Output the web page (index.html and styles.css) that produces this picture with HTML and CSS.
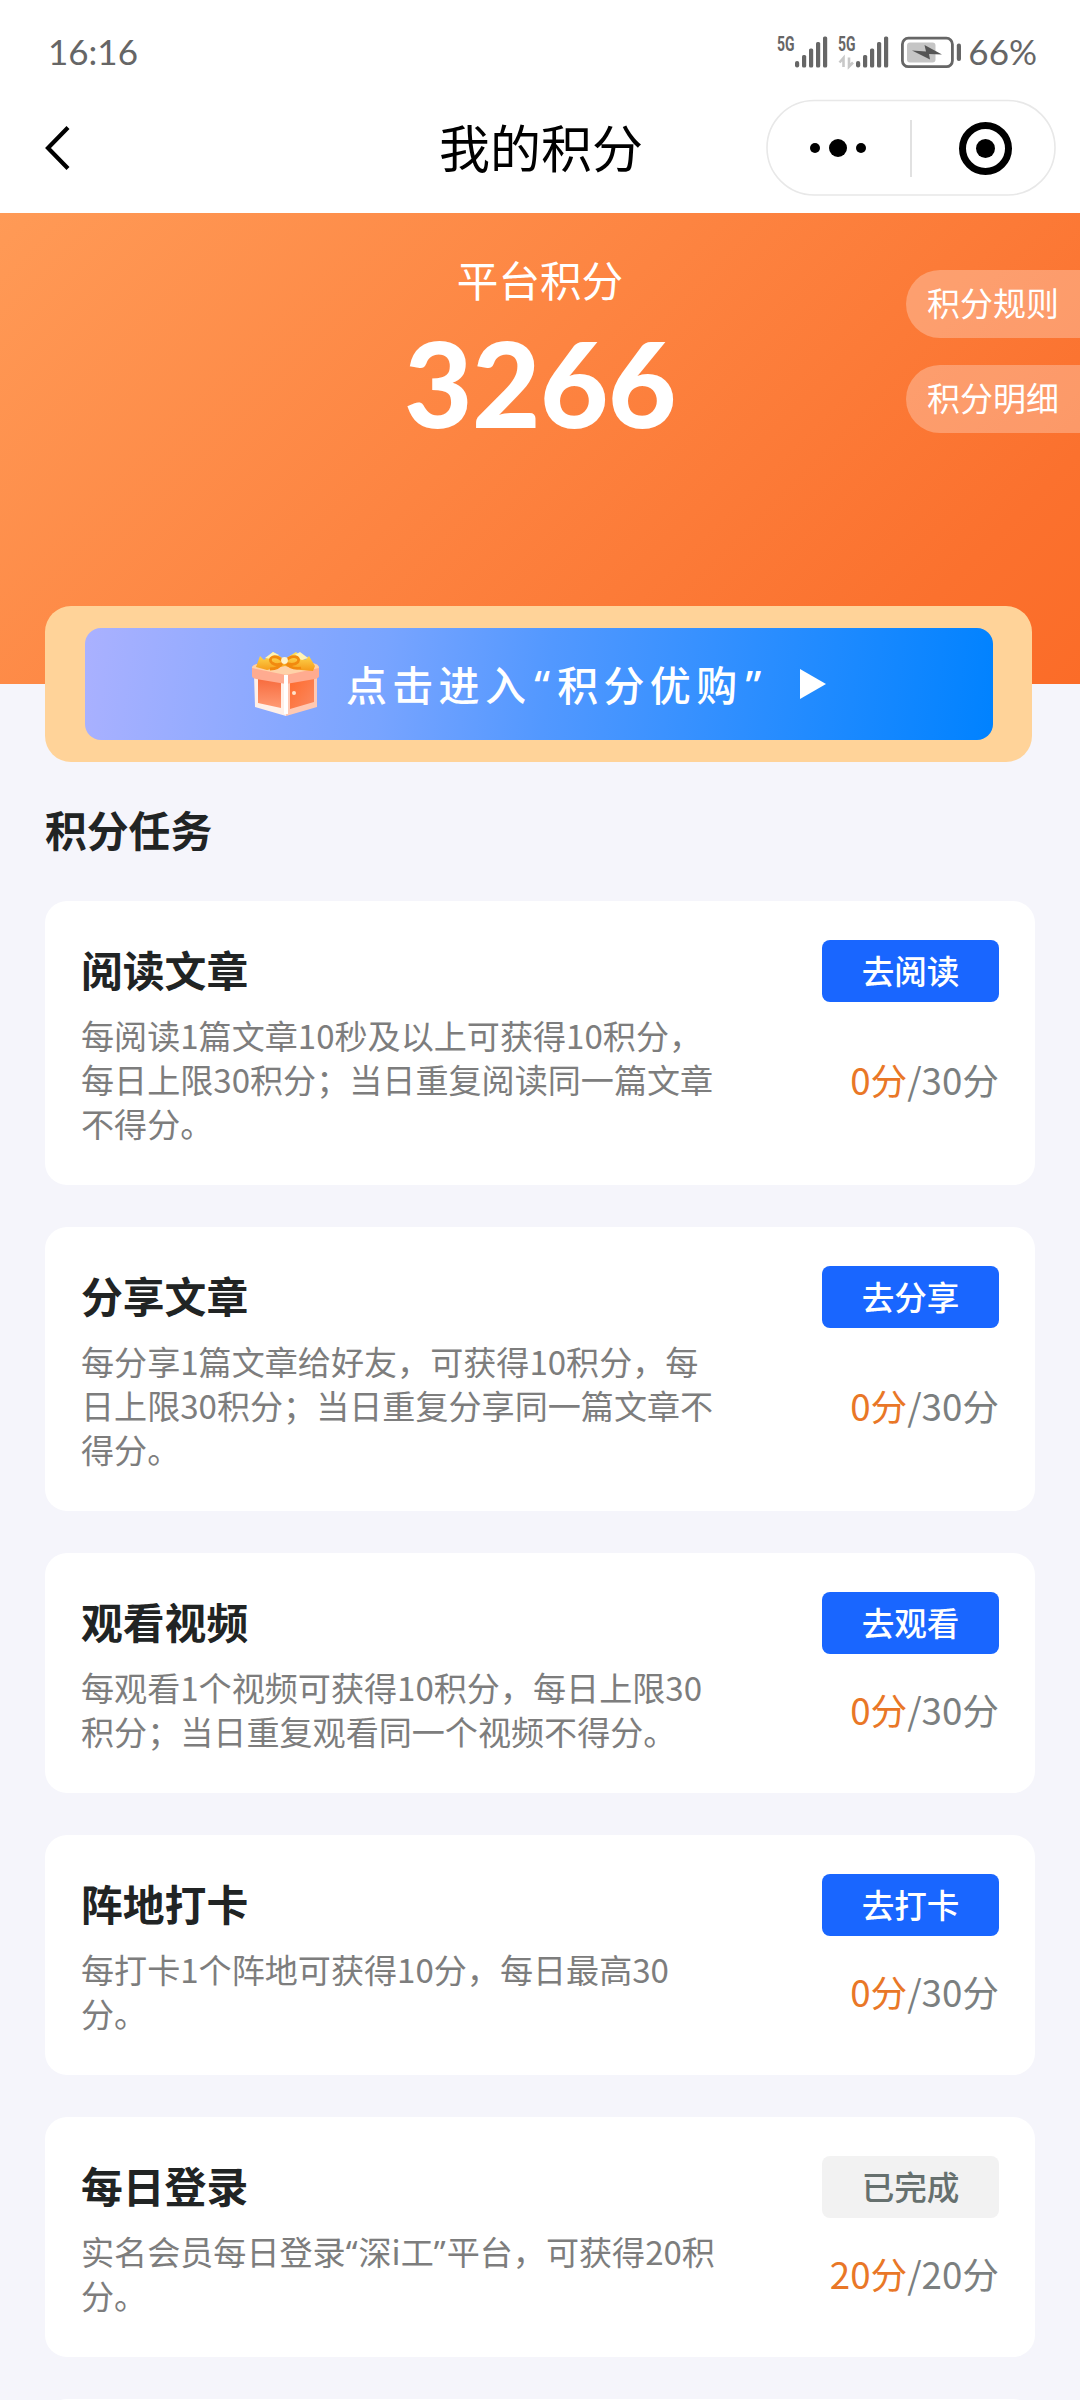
FILE: index.html
```html
<!DOCTYPE html>
<html lang="zh-CN">
<head>
<meta charset="utf-8">
<title>我的积分</title>
<link rel="stylesheet" href="styles.css">
</head>
<body>
<div class="page">
  <header class="top">
    <div class="status">
      <span class="status-text">16:16</span>
      <div class="status-right">
        <svg class="status-icons" width="188" height="40" viewBox="775 32 188 40">
          <g fill="#666">
            <text x="776" y="50.5" class="net" textLength="17.5" lengthAdjust="spacingAndGlyphs">5G</text>
            <text x="837" y="50.5" class="net" textLength="17.5" lengthAdjust="spacingAndGlyphs">5G</text>
            <g id="bars">
              <rect x="794" y="61" width="4.2" height="6.5" rx="2"/>
              <rect x="801" y="55" width="4.2" height="12.5" rx="1.6"/>
              <rect x="808" y="48.5" width="4.2" height="19" rx="1.6"/>
              <rect x="815" y="42" width="4.2" height="25.5" rx="1.6"/>
              <rect x="822" y="36.5" width="4.2" height="31" rx="1.6"/>
            </g>
            <use href="#bars" x="61"/>
          </g>
          <path d="M842.5 67v-9l-4 4.500M848 57.500v9l4-4" fill="none" stroke="#c8c8c8" stroke-width="2.600"/>
          <rect x="901.4" y="38.2" width="50" height="28.5" rx="6" fill="none" stroke="#666" stroke-width="2.8"/>
          <rect x="906" y="42.5" width="28.5" height="20" rx="3" fill="#c5c5c5"/>
          <path d="M911 50.500l14 1-1.500-6.500 17.500 9.500-13-.5 1 5.500z" fill="#555"/>
          <rect x="955.8" y="43.5" width="4.2" height="17.5" rx="2" fill="#666"/>
        </svg>
        <span class="status-text">66%</span>
      </div>
    </div>
    <nav class="nav">
      <svg class="back" width="28" height="52" viewBox="0 0 28 52"><path d="M25 5.500L5 26l20 20.500" fill="none" stroke="#000" stroke-width="4.200"/></svg>
      <h1 class="nav-title">我的积分</h1>
      <svg class="capsule" width="290" height="97" viewBox="766 99 290 97">
        <rect x="767" y="100.5" width="288" height="94.5" rx="47.2" fill="#fff" stroke="#e8e8e8" stroke-width="1.6"/>
        <path d="M911 120v57" stroke="#dedede" stroke-width="1.8"/>
        <circle cx="815" cy="148" r="5"/><circle cx="838" cy="148" r="9"/><circle cx="861" cy="148" r="5"/>
        <circle cx="985.5" cy="148.5" r="23" fill="none" stroke="#000" stroke-width="7"/>
        <circle cx="985.5" cy="148.5" r="9.5"/>
      </svg>
    </nav>
  </header>

  <section class="hero">
    <div class="label">平台积分</div>
    <div class="points">3266</div>
    <div class="links">
      <a class="link">积分规则</a>
      <a class="link">积分明细</a>
    </div>
  </section>

  <div class="shop">
    <a class="shop-btn">
      <svg class="gift" width="72" height="66" viewBox="0 0 72 66">
        <defs>
          <linearGradient id="boxL" x1="0" y1="0" x2="0" y2="1"><stop offset="0" stop-color="#f76a3c"/><stop offset="1" stop-color="#ff9a74"/></linearGradient>
          <linearGradient id="boxR" x1="0" y1="0" x2="1" y2="1"><stop offset="0" stop-color="#ff6a2b"/><stop offset="1" stop-color="#fa8a63"/></linearGradient>
          <linearGradient id="bow" x1="0" y1="0" x2="0" y2="1"><stop offset="0" stop-color="#ffe45c"/><stop offset="1" stop-color="#f59a18"/></linearGradient>
        </defs>
        <path d="M4 23l32 6v36L5 56z" fill="#fff0e8"/>
        <path d="M36 29l31-6v33L36 65z" fill="#ffc9b3"/>
        <path d="M8 27l23 4v26L8 52z" fill="url(#boxL)"/>
        <path d="M40 31l24-5v25l-24 7z" fill="url(#boxR)"/>
        <path d="M2 17q0-3 5-4l27-5 28 4q7 1 7 5v8q0 2-4 3l-29 5-30-5q-4-1-4-3z" fill="#ffab90"/>
        <path d="M2 17q0-3 5-4l27-5 28 4q7 1 7 5l-33 7z" fill="#ffd2a8"/>
        <path d="M36 24v39" stroke="#fff" stroke-width="4"/>
        <path d="M6 16l4-11 4 4 9-8 8 5 3 3 4-3 8-5 9 8 4-4 6 10-2 5-12-1-16-4-18 4z" fill="url(#bow)"/>
        <path d="M15 7l8-6 6 3-7 4zM43 5l7-4 8 6-6 2z" fill="#fff3b5"/>
        <path d="M34 11C24 1 17 8 22 12q6 4 12-1c9-9 17-5 14 0q-5 5-14 0zM33 11q-4 7-13 7M35 11q6 8 16 6" fill="none" stroke="#f28a0f" stroke-width="2.8"/>
        <circle cx="34.5" cy="9.5" r="3.4" fill="#fff4ce"/>
        <circle cx="44" cy="42" r="2" fill="#ffe3cb"/>
      </svg>
      <span class="shop-text">点击进入<span class="q">“</span>积分优购<span class="q">”</span></span>
      <svg class="play" width="26" height="30" viewBox="0 0 26 30"><path d="M0 0l26 15L0 30z" fill="#fff"/></svg>
    </a>
  </div>

  <main class="tasks">
    <h2 class="section-title">积分任务</h2>
    <article class="card">
      <div class="row head"><h3 class="card-title">阅读文章</h3><button class="btn">去阅读</button></div>
      <div class="row body"><p class="desc">每阅读1篇文章10秒及以上可获得10积分，<br>每日上限30积分；当日重复阅读同一篇文章<br>不得分。</p><p class="score"><span class="now">0分</span>/30分</p></div>
    </article>
    <article class="card">
      <div class="row head"><h3 class="card-title">分享文章</h3><button class="btn">去分享</button></div>
      <div class="row body"><p class="desc">每分享1篇文章给好友，可获得10积分，每<br>日上限30积分；当日重复分享同一篇文章不<br>得分。</p><p class="score"><span class="now">0分</span>/30分</p></div>
    </article>
    <article class="card">
      <div class="row head"><h3 class="card-title">观看视频</h3><button class="btn">去观看</button></div>
      <div class="row body"><p class="desc">每观看1个视频可获得10积分，每日上限30<br>积分；当日重复观看同一个视频不得分。</p><p class="score"><span class="now">0分</span>/30分</p></div>
    </article>
    <article class="card">
      <div class="row head"><h3 class="card-title">阵地打卡</h3><button class="btn">去打卡</button></div>
      <div class="row body"><p class="desc">每打卡1个阵地可获得10分，每日最高30<br>分。</p><p class="score"><span class="now">0分</span>/30分</p></div>
    </article>
    <article class="card">
      <div class="row head"><h3 class="card-title">每日登录</h3><button class="btn done">已完成</button></div>
      <div class="row body"><p class="desc">实名会员每日登录<span class="q">“</span>深i工<span class="q">”</span>平台，可获得20积<br>分。</p><p class="score"><span class="now">20分</span>/20分</p></div>
    </article>
    <article class="card"></article>
  </main>
</div>
</body>
</html>
```

FILE: styles.css
```css
* { box-sizing: border-box; margin: 0; padding: 0; }

body {
  background: #f5f5fb;
  font-family: "Noto Sans CJK SC", sans-serif;
  overflow: hidden;
}

.page {
  position: relative;
  width: 1080px;
  height: 2400px;
  overflow: hidden;
}

/* status bar and navigation */
.top { height: 213px; background: #fff; }

.status {
  display: flex;
  justify-content: space-between;
  align-items: center;
  height: 104px;
  padding: 0 43px 0 48px;
}

.status-right { display: flex; align-items: center; gap: 4px; }

.status-text {
  padding-bottom: 2px;
  font: 400 35px/38px Lato, sans-serif;
  color: #666;
}

.net { font: 700 20px Roboto, sans-serif; }

.nav {
  display: grid;
  grid-template-columns: 396px 1fr auto;
  align-items: center;
  height: 97px;
  margin-top: -5px;
  padding: 0 24px 0 43px;
}

.nav-title {
  padding-bottom: 4px;
  font-size: 51px;
  font-weight: 400;
  line-height: 60px;
  color: #000;
}

/* orange header */
.hero {
  position: relative;
  height: 471px;
  padding-top: 36px;
  text-align: center;
  color: #fff;
  background: linear-gradient(135deg, #ff9a56 0%, #fd8441 45%, #fb712e 85%, #fb6c28 100%);
}

.label { font-size: 41.6px; line-height: 60px; }

.points {
  margin-top: 4px;
  font: 900 118px/140px Lato, sans-serif;
  letter-spacing: -0.4px;
}

.links {
  position: absolute;
  top: 57px;
  right: 0;
  display: flex;
  flex-direction: column;
  gap: 27px;
}

.link {
  width: 174px;
  height: 68px;
  padding-left: 21px;
  border-radius: 34px 0 0 34px;
  background: rgba(255, 255, 255, 0.28);
  font-size: 33px;
  line-height: 65px;
  text-align: left;
}

/* shop banner */
.shop {
  position: relative;
  width: 987px;
  height: 156px;
  margin: -78px 0 0 45px;
  padding: 22px 39px 22px 40px;
  border-radius: 26px;
  background: #ffd399;
}

.shop-btn {
  display: flex;
  align-items: center;
  height: 112px;
  padding-left: 165px;
  border-radius: 16px;
  background: linear-gradient(97deg, #aab1ff 0%, #78a4ff 33%, #5298ff 51%, #298dff 75%, #0082ff 100%);
}

.shop-text {
  width: 424px;
  margin-left: 24px;
  padding-bottom: 3px;
  font-size: 41px;
  font-weight: 500;
  line-height: 60px;
  letter-spacing: 5.3px;
  color: #fff;
  white-space: nowrap;
}

.q { font-family: "Noto Sans", sans-serif; line-height: 0; }
.shop-text .q { margin-left: 3px; margin-right: 2px; }
.play { margin-left: 30px; }

/* task list */
.section-title {
  height: 139px;
  padding: 37px 0 0 45px;
  font-size: 41.8px;
  line-height: 60px;
  color: #212424;
}

.tasks { display: flex; flex-direction: column; }

.card {
  width: 990px;
  margin: 0 0 42px 45px;
  padding: 39px 36px 37px 36px;
  border-radius: 22px;
  background: #fff;
}

.row { display: flex; justify-content: space-between; align-items: center; }
.head { height: 62px; margin-bottom: 11px; }
.body { padding-bottom: 3px; }

.card-title {
  padding-bottom: 4px;
  font-size: 41.8px;
  line-height: 58px;
  color: #212424;
}

.btn {
  width: 177px;
  height: 62px;
  padding-bottom: 2px;
  border: 0;
  border-radius: 8px;
  background: #1966ff;
  color: #fff;
  font: 500 32.6px/58px "Noto Sans CJK SC", sans-serif;
}

.done { background: #f2f2f2; color: #66706e; }

.desc {
  font-size: 33.1px;
  line-height: 44px;
  color: #7d7d7d;
  white-space: nowrap;
}

.desc .q { letter-spacing: 1px; }

.score { font-size: 36.7px; line-height: 44px; color: #7b7f80; }
.now { color: #e97727; }
```
